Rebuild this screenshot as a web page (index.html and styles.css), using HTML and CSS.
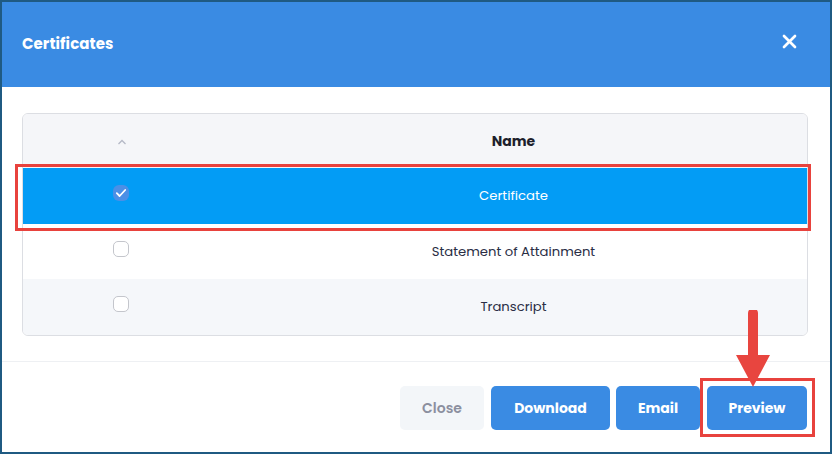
FILE: index.html
```html
<!DOCTYPE html>
<html>
<head>
<meta charset="utf-8">
<link rel="stylesheet" href="styles.css">
</head>
<body>
<div class="frame">
  <div class="modal">
    <div class="header">
      <h1 class="title">Certificates</h1>
      <svg class="close-x" width="15" height="15" viewBox="0 0 15 15"><path d="M2 2 L13 13 M13 2 L2 13" stroke="#fff" stroke-width="2.7" stroke-linecap="round"/></svg>
    </div>
    <div class="body">
      <div class="table">
        <div class="row head">
          <div class="cell sel"><svg width="10" height="6" viewBox="0 0 10 6"><path d="M1.5 5 L5 1.5 L8.5 5" fill="none" stroke="#b5b9c6" stroke-width="1.3"/></svg></div>
          <div class="cell name">Name</div>
        </div>
        <div class="row selected">
          <div class="cell sel"><span class="cb checked"><svg width="12" height="10" viewBox="0 0 12 10"><path d="M1.8 5.2 L4.6 8 L10.2 2" fill="none" stroke="#fff" stroke-width="1.8" stroke-linecap="round" stroke-linejoin="round"/></svg></span></div>
          <div class="cell name">Certificate</div>
        </div>
        <div class="row">
          <div class="cell sel"><span class="cb"></span></div>
          <div class="cell name">Statement of Attainment</div>
        </div>
        <div class="row alt last">
          <div class="cell sel"><span class="cb"></span></div>
          <div class="cell name">Transcript</div>
        </div>
      </div>
    </div>
    <div class="footer">
      <button class="btn light">Close</button>
      <button class="btn primary w-download">Download</button>
      <button class="btn primary w-email">Email</button>
      <button class="btn primary w-preview">Preview</button>
    </div>
    <div class="hl hl-row"></div>
    <div class="hl hl-btn"></div>
    <svg class="arrow" width="40" height="80" viewBox="0 0 40 80"><path d="M20 3 L20 50" stroke="#e8453f" stroke-width="10" stroke-linecap="round"/><path d="M3 45 L37 45 L20 77 Z" fill="#e8453f"/></svg>
  </div>
</div>
</body>
</html>
```
FILE: styles.css
```css
html, body {
  margin: 0;
  padding: 0;
}
body {
  width: 832px;
  height: 454px;
  font-family: "Poppins", "Inter", "Open Sans", sans-serif;
  background: #ffffff;
}
.frame {
  width: 832px;
  height: 454px;
  box-sizing: border-box;
  border: 2px solid #1f5a82;
}
.modal {
  position: relative;
  height: 100%;
  display: flex;
  flex-direction: column;
  background: #fff;
}
.header {
  height: 85px;
  background: #3a8be3;
  display: flex;
  align-items: center;
  justify-content: space-between;
  padding: 0 33px 0 20px;
  box-sizing: border-box;
  flex: none;
}
.title {
  margin: 0;
  margin-top: -3px;
  color: #fff;
  font-size: 15px;
  font-weight: 700;
  letter-spacing: 0.1px;
}
.close-x {
  margin-top: -7px;
}
.body {
  padding: 26px 22px 25px 20px;
  border-bottom: 1px solid #eef0f3;
  flex: none;
}
.table {
  border: 1px solid #dcdee3;
  border-radius: 6px;
  overflow: hidden;
}
.row {
  display: grid;
  grid-template-columns: 197px 1fr;
  height: 55px;
  align-items: center;
  font-size: 13.2px;
  color: #2a2e45;
}
.row.head {
  background: #f5f6f9;
  height: 54px;
  font-weight: 700;
  font-size: 14px;
  color: #1d1f2c;
}
.row.selected {
  background: #039cf5;
  color: #fff;
  height: 56px;
}
.row.alt {
  background: #f5f7fa;
  height: 56px;
}
.cell {
  display: flex;
  justify-content: center;
  align-items: center;
}
.row.head .sel {
  margin-top: 1px;
}
.cb {
  width: 16px;
  height: 16px;
  box-sizing: border-box;
  border: 1.5px solid #c4c6cc;
  border-radius: 5px;
  background: #fff;
  display: flex;
  align-items: center;
  justify-content: center;
  margin-top: -6px;
  margin-left: -1px;
}
.cb.checked {
  background: #4b8fe6;
  border-color: #4b8fe6;
  border-width: 0;
  border-radius: 6px;
  margin-top: -6px;
}
.row .name {
  margin-top: 0;
}
.footer {
  flex: 1;
  display: flex;
  justify-content: flex-end;
  align-items: flex-start;
  padding: 24px 23px 0 0;
  gap: 7px;
}
.btn {
  height: 44px;
  border: 0;
  border-radius: 5px;
  font-family: inherit;
  font-size: 14px;
  font-weight: 700;
  padding: 0;
  cursor: pointer;
}
.btn.light {
  width: 84px;
  background: #f3f6f9;
  color: #8b8f9f;
  font-weight: 600;
}
.btn.primary {
  background: #3a8be3;
  color: #fff;
}
.w-download { width: 119px; }
.w-email { width: 84px; margin-left: -1px; }
.w-preview { width: 100px; }
.hl {
  position: absolute;
  border: 3px solid #e8423d;
  box-sizing: border-box;
  pointer-events: none;
}
.hl-row {
  left: 13px;
  top: 162px;
  width: 796px;
  height: 67px;
}
.hl-btn {
  left: 698px;
  top: 376px;
  width: 115px;
  height: 59px;
}
.arrow {
  position: absolute;
  left: 731px;
  top: 308px;
}
```
